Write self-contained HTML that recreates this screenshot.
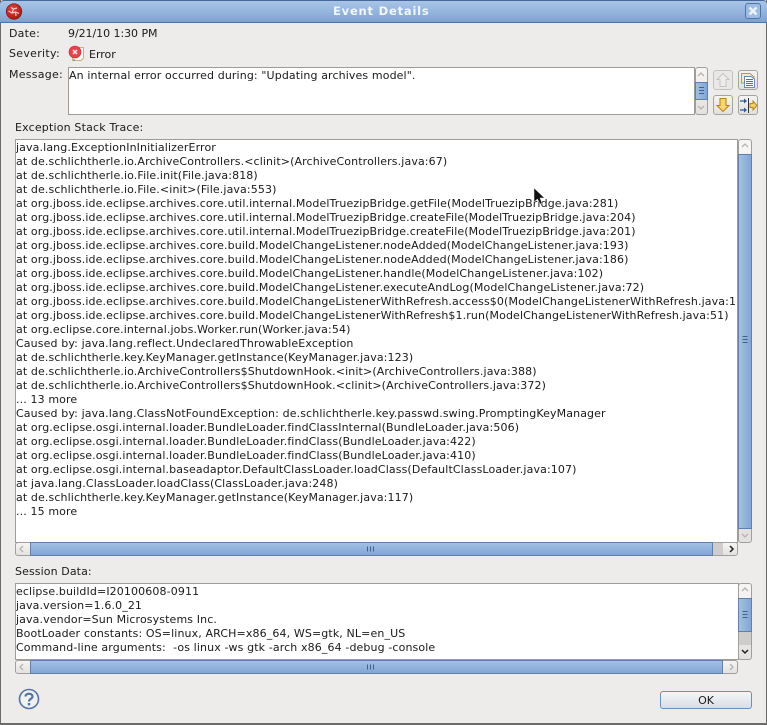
<!DOCTYPE html>
<html><head><meta charset="utf-8">
<style>
html,body{margin:0;padding:0;width:767px;height:725px;overflow:hidden;background:#edeceb}
*{box-sizing:border-box}
body{font-family:"DejaVu Sans",sans-serif;font-size:11px;color:#1a1a1a;position:relative}
.a{position:absolute}
.t{position:absolute;white-space:pre;line-height:14px;height:14px}
.box{position:absolute;background:#fff;border:1px solid #9d9c9b;overflow:hidden}
.lines{position:absolute;left:0;top:0;white-space:pre;line-height:14px;letter-spacing:.12px}
.thumbv{position:absolute;background:linear-gradient(90deg,#a3bfe3,#82a6d6);border:1px solid #5f80ab}
.thumbh{position:absolute;background:linear-gradient(180deg,#a3bfe3,#82a6d6);border:1px solid #5f80ab}
.sb{position:absolute;background:linear-gradient(180deg,#f6f5f4,#e4e2e0);border:1px solid #a19f9d;border-radius:3px}
.trough{position:absolute;background:#cfcdcb}
.ib{position:absolute;width:20px;height:20px;border:1px solid #a5a3a1;border-radius:3px;background:linear-gradient(180deg,#f5f4f3,#e2e0de)}
svg{position:absolute;display:block}
</style></head><body>
<!-- window border -->
<div class="a" style="left:0;top:0;width:767px;height:725px;border-left:1px solid #6b6a69;border-right:1px solid #6b6a69;border-bottom:2px solid #6b6a69"></div>
<!-- titlebar -->
<div class="a" style="left:0;top:0;width:767px;height:23px;background:linear-gradient(180deg,#a9c5e6 0%,#94b5dd 50%,#7ea2d0 100%);border-top:1px solid #46689a;border-bottom:1px solid #4f74a6;border-radius:4px 4px 0 0"></div>
<div class="t" style="left:333px;top:4px;font-weight:bold;color:#f2f5fa;letter-spacing:.8px;font-size:11.5px">Event Details</div>
<svg style="left:5px;top:3px" width="18" height="18" viewBox="0 0 18 18"><defs><radialGradient id="rg" cx=".4" cy=".35" r=".75"><stop offset="0" stop-color="#e0443e"/><stop offset="1" stop-color="#a01512"/></radialGradient></defs><circle cx="9" cy="8.500" r="7.800" fill="url(#rg)" stroke="#7a1512" stroke-width=".6"/><path d="M3.500 8 L7 10 L8.500 6 L12 5 M7 10 L10.500 9 L14 10.500 M8.500 6 L6 4.500 M10.500 9 L11 13" stroke="#f6c9c6" stroke-width="1.200" fill="none"/></svg>
<div class="a" style="left:745px;top:3px;width:16px;height:16px;border:1px solid #4f74a6;border-radius:3px;background:#9dbce0"></div>
<svg style="left:745px;top:3px" width="16" height="16" viewBox="0 0 16 16"><path d="M4.500 4.500 L11.500 11.500 M11.500 4.500 L4.500 11.500" stroke="#eef3fa" stroke-width="2.400" fill="none"/></svg>

<div class="t" style="left:9px;top:27px;letter-spacing:.2px">Date:</div>
<div class="t" style="left:68px;top:27px;letter-spacing:-.05px">9/21/10 1:30 PM</div>
<div class="t" style="left:9px;top:47px;letter-spacing:.3px">Severity:</div>
<svg style="left:68px;top:45px" width="18" height="18" viewBox="0 0 18 18"><path d="M4.500 2.500 H15.500 V13 L13 15.500 H4.500 Z" fill="#fbfbf7" stroke="#c9b27c"/><circle cx="7" cy="7" r="6" fill="#e2474d" stroke="#bb2a31" stroke-width=".6"/><path d="M5 5 L9 9 M9 5 L5 9" stroke="#ffe9ea" stroke-width="1.500"/><path d="M5 15 h2" stroke="#4a7ac0"/></svg>
<div class="t" style="left:89px;top:48px">Error</div>
<div class="t" style="left:9px;top:68px;letter-spacing:.25px">Message:</div>

<div class="box" style="left:68px;top:67px;width:627px;height:48px">
<div class="t" style="left:0;top:1px;letter-spacing:.12px">An internal error occurred during: "Updating archives model".</div>
</div>
<!-- message scrollbar -->
<div class="sb" style="left:695px;top:67px;width:13px;height:48px"></div>
<svg style="left:694px;top:68px" width="14" height="14"><path d="M4 8 L7 5 L10 8" stroke="#b5b3b1" stroke-width="1.300" fill="none"/></svg>
<svg style="left:694px;top:101px" width="14" height="14"><path d="M4 5 L7 8 L10 5" stroke="#b5b3b1" stroke-width="1.300" fill="none"/></svg>
<div class="thumbv" style="left:695px;top:82px;width:13px;height:18px"></div>
<svg style="left:695px;top:82px" width="13" height="18"><path d="M4 5.500 H9 M4 8.500 H9 M4 11.500 H9" stroke="#3f5f8c"/></svg>

<!-- icon buttons -->
<div class="ib" style="left:713px;top:70px;background:#e9e8e6;border-color:#c4c2c0"></div>
<svg style="left:713px;top:70px" width="20" height="20"><path d="M10 3.500 L16 9.500 H13 V16.500 H7 V9.500 H4 Z" fill="#eeedeb" stroke="#c6c4c2"/></svg>
<div class="ib" style="left:738px;top:70px"></div>
<svg style="left:738px;top:70px" width="20" height="20"><path d="M3.500 3.500 H12 L16 7 V13 H3.500 Z" fill="#f3e9c8" stroke="#b39a5e"/><path d="M6.500 6.500 H13 L16.500 9 V17.500 H6.500 Z" fill="#fff" stroke="#7189ad"/><path d="M8 9.500 H15 M8 11.500 H15 M8 13.500 H15 M8 15.500 H15" stroke="#4a6ea8"/></svg>
<div class="ib" style="left:713px;top:95px"></div>
<svg style="left:713px;top:95px" width="20" height="20"><path d="M10 16.500 L16 10.500 H13 V3.500 H7 V10.500 H4 Z" fill="#f8d675" stroke="#b9851b" stroke-width="1.100"/></svg>
<div class="ib" style="left:738px;top:95px"></div>
<svg style="left:738px;top:95px" width="20" height="20"><path d="M2 6 H8 M2 15 H8" stroke="#2f5a94" stroke-width="1.200"/><path d="M6 3.500 L9 6 L6 8.500 Z M6 12.500 L9 15 L6 17.500 Z" fill="#2f5a94"/><path d="M10.500 3 V18" stroke="#333"/><path d="M12 8.500 H15 V6 L19 10.500 L15 15 V12.500 H12 Z" fill="#f5cf6a" stroke="#b08a20"/></svg>

<div class="t" style="left:15px;top:121px;letter-spacing:.18px">Exception Stack Trace:</div>
<div class="box" style="left:15px;top:139px;width:723px;height:404px">
<div class="lines" style="left:0;top:1px">java.lang.ExceptionInInitializerError
at de.schlichtherle.io.ArchiveControllers.&lt;clinit&gt;(ArchiveControllers.java:67)
at de.schlichtherle.io.File.init(File.java:818)
at de.schlichtherle.io.File.&lt;init&gt;(File.java:553)
at org.jboss.ide.eclipse.archives.core.util.internal.ModelTruezipBridge.getFile(ModelTruezipBridge.java:281)
at org.jboss.ide.eclipse.archives.core.util.internal.ModelTruezipBridge.createFile(ModelTruezipBridge.java:204)
at org.jboss.ide.eclipse.archives.core.util.internal.ModelTruezipBridge.createFile(ModelTruezipBridge.java:201)
at org.jboss.ide.eclipse.archives.core.build.ModelChangeListener.nodeAdded(ModelChangeListener.java:193)
at org.jboss.ide.eclipse.archives.core.build.ModelChangeListener.nodeAdded(ModelChangeListener.java:186)
at org.jboss.ide.eclipse.archives.core.build.ModelChangeListener.handle(ModelChangeListener.java:102)
at org.jboss.ide.eclipse.archives.core.build.ModelChangeListener.executeAndLog(ModelChangeListener.java:72)
at org.jboss.ide.eclipse.archives.core.build.ModelChangeListenerWithRefresh.access$0(ModelChangeListenerWithRefresh.java:1
at org.jboss.ide.eclipse.archives.core.build.ModelChangeListenerWithRefresh$1.run(ModelChangeListenerWithRefresh.java:51)
at org.eclipse.core.internal.jobs.Worker.run(Worker.java:54)
Caused by: java.lang.reflect.UndeclaredThrowableException
at de.schlichtherle.key.KeyManager.getInstance(KeyManager.java:123)
at de.schlichtherle.io.ArchiveControllers$ShutdownHook.&lt;init&gt;(ArchiveControllers.java:388)
at de.schlichtherle.io.ArchiveControllers$ShutdownHook.&lt;clinit&gt;(ArchiveControllers.java:372)
... 13 more
Caused by: java.lang.ClassNotFoundException: de.schlichtherle.key.passwd.swing.PromptingKeyManager
at org.eclipse.osgi.internal.loader.BundleLoader.findClassInternal(BundleLoader.java:506)
at org.eclipse.osgi.internal.loader.BundleLoader.findClass(BundleLoader.java:422)
at org.eclipse.osgi.internal.loader.BundleLoader.findClass(BundleLoader.java:410)
at org.eclipse.osgi.internal.baseadaptor.DefaultClassLoader.loadClass(DefaultClassLoader.java:107)
at java.lang.ClassLoader.loadClass(ClassLoader.java:248)
at de.schlichtherle.key.KeyManager.getInstance(KeyManager.java:117)
... 15 more</div>
</div>
<!-- stack vscroll -->
<div class="sb" style="left:738px;top:139px;width:14px;height:404px"></div>
<svg style="left:738px;top:139px" width="14" height="14"><path d="M4 8 L7 5 L10 8" stroke="#b5b3b1" stroke-width="1.300" fill="none"/></svg>
<svg style="left:738px;top:529px" width="14" height="14"><path d="M4 5 L7 8 L10 5" stroke="#b5b3b1" stroke-width="1.300" fill="none"/></svg>
<div class="thumbv" style="left:738px;top:154px;width:14px;height:375px"></div>
<svg style="left:738px;top:332px" width="14" height="14"><path d="M4.500 4.500 H9.500 M4.500 7.500 H9.500 M4.500 10.500 H9.500" stroke="#3f5f8c"/></svg>
<!-- stack hscroll -->
<div class="sb" style="left:15px;top:542px;width:723px;height:14px"></div>
<div class="trough" style="left:713px;top:543px;width:10px;height:12px"></div>
<svg style="left:15px;top:542px" width="14" height="14"><path d="M8 4 L5 7 L8 10" stroke="#b5b3b1" stroke-width="1.300" fill="none"/></svg>
<svg style="left:724px;top:542px" width="14" height="14"><path d="M6 4 L9 7 L6 10" stroke="#222" stroke-width="1.500" fill="none"/></svg>
<div class="thumbh" style="left:30px;top:542px;width:683px;height:14px"></div>
<svg style="left:365px;top:542px" width="12" height="14"><path d="M2.500 4.500 V9.500 M5.500 4.500 V9.500 M8.500 4.500 V9.500" stroke="#3f5f8c"/></svg>

<div class="t" style="left:15px;top:565px;letter-spacing:.1px">Session Data:</div>
<div class="box" style="left:15px;top:583px;width:724px;height:77px">
<div class="lines" style="left:0;top:1px">eclipse.buildId=I20100608-0911
java.version=1.6.0_21
java.vendor=Sun Microsystems Inc.
BootLoader constants: OS=linux, ARCH=x86_64, WS=gtk, NL=en_US
Command-line arguments:  -os linux -ws gtk -arch x86_64 -debug -console</div>
</div>
<div class="sb" style="left:738px;top:583px;width:14px;height:77px"></div>
<div class="trough" style="left:739px;top:632px;width:12px;height:13px"></div>
<svg style="left:738px;top:583px" width="14" height="14"><path d="M4 8 L7 5 L10 8" stroke="#b5b3b1" stroke-width="1.300" fill="none"/></svg>
<svg style="left:738px;top:645px" width="14" height="14"><path d="M4 5 L7 8 L10 5" stroke="#222" stroke-width="1.500" fill="none"/></svg>
<div class="thumbv" style="left:738px;top:598px;width:14px;height:34px"></div>
<svg style="left:738px;top:607px" width="14" height="14"><path d="M4.500 4.500 H9.500 M4.500 7.500 H9.500 M4.500 10.500 H9.500" stroke="#3f5f8c"/></svg>
<div class="sb" style="left:15px;top:660px;width:723px;height:14px"></div>
<svg style="left:15px;top:660px" width="14" height="14"><path d="M8 4 L5 7 L8 10" stroke="#b5b3b1" stroke-width="1.300" fill="none"/></svg>
<svg style="left:724px;top:660px" width="14" height="14"><path d="M6 4 L9 7 L6 10" stroke="#b5b3b1" stroke-width="1.300" fill="none"/></svg>
<div class="thumbh" style="left:30px;top:660px;width:693px;height:14px"></div>
<svg style="left:365px;top:660px" width="12" height="14"><path d="M2.500 4.500 V9.500 M5.500 4.500 V9.500 M8.500 4.500 V9.500" stroke="#3f5f8c"/></svg>

<!-- help -->
<svg style="left:18px;top:688px" width="22" height="22" viewBox="0 0 22 22"><circle cx="11" cy="11" r="9.500" fill="#f1f1f2" stroke="#55749f" stroke-width="1.600"/><path d="M7.500 8.500 C7.500 4.800 14.500 4.800 14.500 8.500 C14.500 11 11 10.800 11 13.500" fill="none" stroke="#55749f" stroke-width="2.200"/><rect x="9.800" y="15" width="2.400" height="2.400" fill="#55749f"/></svg>
<!-- OK -->
<div class="a" style="left:660px;top:691px;width:92px;height:18px;border:1px solid #6f8fb8;border-radius:3px;background:linear-gradient(180deg,#f5f6f8,#d9dde3);text-align:center;line-height:17px">OK</div>
<!-- cursor -->
<svg style="left:533px;top:187px" width="14" height="20" viewBox="0 0 14 20"><path d="M1 1 V15 L4.500 12 L7 17 L9 16 L7 11 H11.500 Z" fill="#111" stroke="#eee" stroke-width=".5"/></svg>
</body></html>
